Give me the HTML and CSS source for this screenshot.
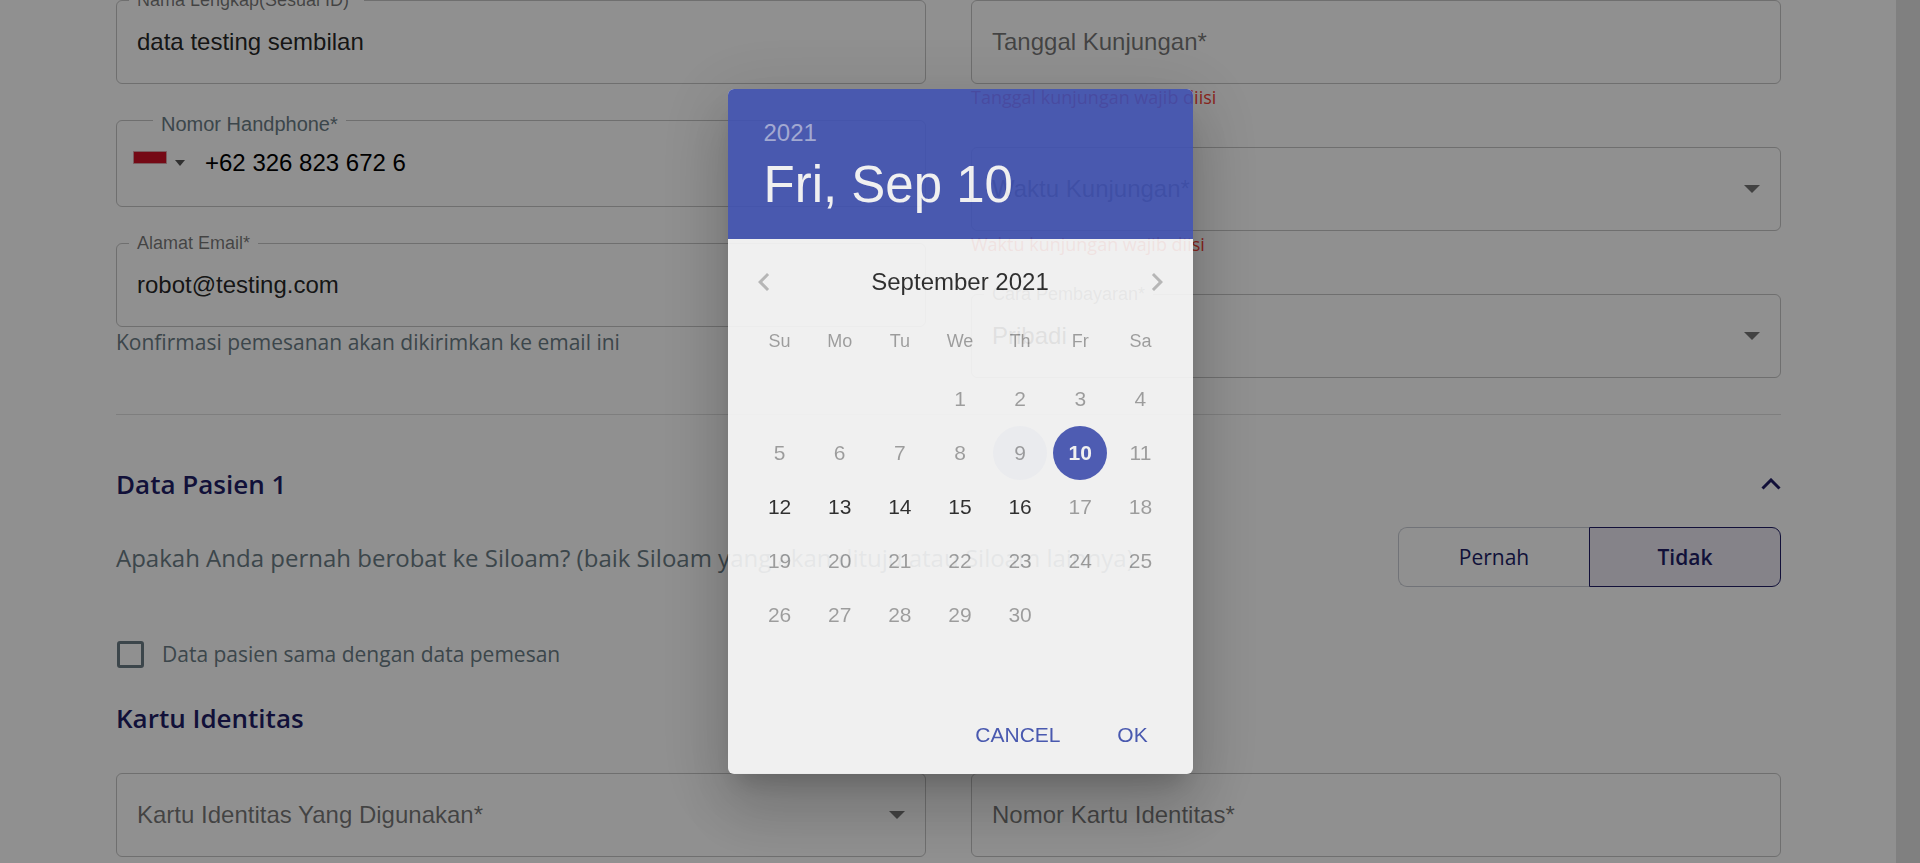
FILE: index.html
```html
<!DOCTYPE html>
<html lang="id">
<head>
<meta charset="utf-8">
<meta name="viewport" content="width=device-width, initial-scale=1">
<title>Data Pemesan</title>
<link rel="stylesheet" href="styles.css">
</head>
<body>
<main class="page">
  <div class="columns">
    <div class="column">
      <div class="field">
        <label class="field-label" for="name">Nama Lengkap(Sesuai ID)*</label>
        <input class="field-input" id="name" type="text" value="data testing sembilan">
      </div>
      <div class="field phone">
        <label class="field-label phone-label" for="phone">Nomor Handphone*</label>
        <button class="country" type="button" aria-label="Indonesia">
          <svg class="flag" viewBox="0 0 34 26" aria-hidden="true"><path fill="#fff" d="M0 0h34v24H0z"/><path fill="#d01126" stroke="#d9a5aa" stroke-width="1" d="M.5.5h33v12H.5z"/></svg>
          <svg class="flag-arrow" viewBox="0 0 10 8" aria-hidden="true"><path fill="#555" d="M0 0h10L5 6z"/></svg>
        </button>
        <input class="field-input phone-input" id="phone" type="tel" value="+62 326 823 672 6">
      </div>
      <div class="field email">
        <label class="field-label" for="email">Alamat Email*</label>
        <input class="field-input" id="email" type="email" value="robot@testing.com">
      </div>
      <p class="hint">Konfirmasi pemesanan akan dikirimkan ke email ini</p>
    </div>
    <div class="column">
      <div class="field">
        <input class="field-input" type="text" placeholder="Tanggal Kunjungan*" aria-label="Tanggal Kunjungan">
      </div>
      <p class="error">Tanggal kunjungan wajib diisi</p>
      <div class="field">
        <select class="field-input empty" aria-label="Waktu Kunjungan"><option>Waktu Kunjungan*</option></select>
        <svg class="caret" viewBox="0 0 16 8" aria-hidden="true"><path fill="#757575" d="M0 0h16L8 8z"/></svg>
      </div>
      <p class="error">Waktu kunjungan wajib diisi</p>
      <div class="field">
        <label class="field-label" for="payment">Cara Pembayaran*</label>
        <select class="field-input" id="payment"><option>Pribadi</option></select>
        <svg class="caret" viewBox="0 0 16 8" aria-hidden="true"><path fill="#757575" d="M0 0h16L8 8z"/></svg>
      </div>
    </div>
  </div>

  <section class="patient">
    <header class="patient-head">
      <h2 class="title">Data Pasien 1</h2>
      <button class="collapse" type="button" aria-label="Tutup">
        <svg class="collapse-icon" viewBox="0 0 20 12" aria-hidden="true"><path fill="none" stroke="#201e66" stroke-width="3" d="M1.5 10.5 10 2l8.500 8.500"/></svg>
      </button>
    </header>
    <div class="question">
      <p class="question-text">Apakah Anda pernah berobat ke Siloam? (baik Siloam yang akan dituju atau Siloam lainnya)</p>
      <div class="toggle">
        <button class="toggle-option" type="button">Pernah</button>
        <button class="toggle-option chosen" type="button">Tidak</button>
      </div>
    </div>
    <label class="same"><input class="same-box" type="checkbox"><span>Data pasien sama dengan data pemesan</span></label>
    <h2 class="title">Kartu Identitas</h2>
    <div class="columns identity">
      <div class="field">
        <select class="field-input empty" aria-label="Kartu Identitas"><option>Kartu Identitas Yang Digunakan*</option></select>
        <svg class="caret" viewBox="0 0 16 8" aria-hidden="true"><path fill="#757575" d="M0 0h16L8 8z"/></svg>
      </div>
      <div class="field">
        <input class="field-input" type="text" placeholder="Nomor Kartu Identitas*" aria-label="Nomor Kartu Identitas">
      </div>
    </div>
  </section>
</main>

<div class="backdrop"></div>
<div class="modal">
  <div class="picker" role="dialog" aria-modal="true" aria-label="Pilih tanggal">
    <div class="picker-head">
      <button class="picker-year" type="button">2021</button>
      <h3 class="picker-date">Fri, Sep 10</h3>
    </div>
    <div class="picker-body">
      <div class="month">
        <button class="month-nav" type="button" aria-label="Sebelumnya"><svg class="month-icon" viewBox="0 0 24 24" aria-hidden="true"><path d="M15.410 16.590 10.830 12l4.580-4.590L14 6l-6 6 6 6z"/></svg></button>
        <p class="month-name">September 2021</p>
        <button class="month-nav" type="button" aria-label="Berikutnya"><svg class="month-icon" viewBox="0 0 24 24" aria-hidden="true"><path d="M8.590 16.590 13.170 12 8.590 7.410 10 6l6 6-6 6z"/></svg></button>
      </div>
      <table class="days">
        <thead><tr><th>Su</th><th>Mo</th><th>Tu</th><th>We</th><th>Th</th><th>Fr</th><th>Sa</th></tr></thead>
        <tbody>
          <tr><td></td><td></td><td></td><td><button class="day" disabled>1</button></td><td><button class="day" disabled>2</button></td><td><button class="day" disabled>3</button></td><td><button class="day" disabled>4</button></td></tr>
          <tr><td><button class="day" disabled>5</button></td><td><button class="day" disabled>6</button></td><td><button class="day" disabled>7</button></td><td><button class="day" disabled>8</button></td><td><button class="day touched" disabled>9</button></td><td><button class="day selected">10</button></td><td><button class="day" disabled>11</button></td></tr>
          <tr><td><button class="day">12</button></td><td><button class="day">13</button></td><td><button class="day">14</button></td><td><button class="day">15</button></td><td><button class="day">16</button></td><td><button class="day" disabled>17</button></td><td><button class="day" disabled>18</button></td></tr>
          <tr><td><button class="day" disabled>19</button></td><td><button class="day" disabled>20</button></td><td><button class="day" disabled>21</button></td><td><button class="day" disabled>22</button></td><td><button class="day" disabled>23</button></td><td><button class="day" disabled>24</button></td><td><button class="day" disabled>25</button></td></tr>
          <tr><td><button class="day" disabled>26</button></td><td><button class="day" disabled>27</button></td><td><button class="day" disabled>28</button></td><td><button class="day" disabled>29</button></td><td><button class="day" disabled>30</button></td><td></td><td></td></tr>
        </tbody>
      </table>
    </div>
    <div class="picker-actions">
      <button class="action" type="button">CANCEL</button>
      <button class="action" type="button">OK</button>
    </div>
  </div>
</div>
</body>
</html>
```
FILE: styles.css
```css
* {
  box-sizing: border-box;
}

html {
  height: 100%;
  overflow: hidden;
}

body {
  margin: 0;
  height: 100%;
  overflow: hidden;
  padding-right: 24px;
  background: #e3e3e3;
  font-family: "Liberation Sans", Arial, sans-serif;
  font-size: 24px;
  color: rgba(0, 0, 0, 0.87);
}

button,
input,
select {
  font: inherit;
  color: inherit;
}

button {
  border: 0;
  padding: 0;
  background: none;
}

p,
h2,
h3 {
  margin: 0;
}

.page {
  min-height: 100%;
  padding: 0 115px 0 116px;
  background: #fff;
}

.columns {
  display: grid;
  grid-template-columns: 1fr 1fr;
  gap: 45px;
}

.field {
  position: relative;
  display: flex;
  align-items: center;
  height: 84px;
  border: 1px solid rgba(0, 0, 0, 0.23);
  border-radius: 6px;
}

.field-input {
  flex: 1;
  min-width: 0;
  height: 100%;
  padding: 0 20px 1px;
  border: 0;
  outline: 0;
  background: none;
  appearance: none;
}

.field-input::placeholder,
.empty {
  color: rgba(0, 0, 0, 0.54);
  opacity: 1;
}

.field-label {
  position: absolute;
  top: -13px;
  left: 12px;
  padding: 0 8px;
  background: #fff;
  font-size: 18px;
  line-height: 24px;
  color: rgba(0, 0, 0, 0.54);
}

.caret {
  position: absolute;
  right: 20px;
  width: 16px;
  height: 8px;
}

.phone {
  height: 87px;
  margin-top: 36px;
}

.phone-label {
  top: -9px;
  left: 36px;
  font-size: 20px;
  color: #6b7c85;
}

.country {
  display: flex;
  align-items: center;
  gap: 8px;
  padding-left: 16px;
}

.flag {
  width: 34px;
  height: 26px;
}

.flag-arrow {
  width: 10px;
  height: 8px;
}

.phone-input {
  padding-bottom: 2px;
  color: #000;
}

.email {
  margin-top: 36px;
}

.hint {
  font-family: "Open Sans", sans-serif;
  font-size: 21px;
  line-height: 30px;
  color: #6b7c85;
}

.error {
  height: 63px;
  font-family: "Open Sans", sans-serif;
  font-size: 18px;
  line-height: 26px;
  color: #f44336;
}

.patient {
  margin-top: 36px;
  border-top: 1px solid rgba(0, 0, 0, 0.12);
  padding-top: 51px;
  font-family: "Open Sans", sans-serif;
  color: #6b7c85;
}

.title {
  font-size: 26px;
  font-weight: 600;
  line-height: 36px;
  color: #201e66;
}

.patient-head,
.question {
  display: flex;
  align-items: center;
  justify-content: space-between;
}

.collapse-icon {
  display: block;
  width: 20px;
  height: 12px;
}

.question {
  margin-top: 25px;
}

.toggle {
  display: flex;
  width: 383px;
}

.toggle-option {
  flex: 1;
  height: 60px;
  border: 1px solid #c8ccd4;
  border-right: 0;
  border-radius: 9px 0 0 9px;
  font-size: 21px;
  color: #201e66;
}

.toggle-option.chosen {
  border: 1px solid #201e66;
  border-radius: 0 9px 9px 0;
  background: #ebe9f2;
  font-weight: 600;
}

.same {
  display: flex;
  align-items: center;
  gap: 18px;
  margin-top: 49px;
  padding-left: 1px;
  font-size: 21px;
  line-height: 36px;
}

.same-box {
  width: 27px;
  height: 27px;
  margin: 0;
  border: 3px solid #6b7c85;
  border-radius: 3px;
  appearance: none;
}

.same + .title {
  margin-top: 28px;
}

.identity {
  margin-top: 37px;
  font-family: "Liberation Sans", Arial, sans-serif;
}

.backdrop {
  position: fixed;
  inset: 0;
  background: #000;
  opacity: 0.435;
}

.modal {
  position: fixed;
  inset: 0;
  display: flex;
  align-items: center;
  justify-content: center;
  opacity: 0.87;
}

.picker {
  width: 465px;
  overflow: hidden;
  border-radius: 6px;
  background: #fff;
  box-shadow:
    0 16px 22px -10px rgba(0, 0, 0, 0.2),
    0 36px 57px 4px rgba(0, 0, 0, 0.14),
    0 14px 69px 12px rgba(0, 0, 0, 0.12);
}

.picker-head {
  display: flex;
  flex-direction: column;
  align-items: flex-start;
  justify-content: center;
  height: 150px;
  padding: 0 36px;
  background: #3f51b5;
  color: #fff;
}

.picker-year {
  padding-bottom: 2px;
  line-height: 40px;
  color: rgba(255, 255, 255, 0.54);
}

.picker-date {
  font-size: 51px;
  font-weight: 400;
  line-height: 60px;
}

.picker-body {
  height: 457px;
  padding: 7px 22px 0;
}

.month {
  display: flex;
  align-items: center;
  justify-content: space-between;
  height: 72px;
}

.month-nav {
  margin: 0 -13px;
  padding: 0 9px;
}

.month-icon {
  display: block;
  width: 36px;
  height: 36px;
  fill: rgba(0, 0, 0, 0.26);
}

.days {
  width: 100%;
  table-layout: fixed;
  border-collapse: collapse;
}

.days th {
  height: 54px;
  padding: 0 0 8px;
  font-size: 18px;
  font-weight: 400;
  color: rgba(0, 0, 0, 0.38);
}

.days td {
  height: 54px;
  padding: 0;
  text-align: center;
}

.day {
  width: 54px;
  height: 54px;
  border-radius: 50%;
  font-size: 21px;
  vertical-align: top;
  color: rgba(0, 0, 0, 0.87);
}

.day:disabled {
  color: rgba(0, 0, 0, 0.38);
}

.day.touched {
  background: rgba(63, 81, 181, 0.03);
}

.day.selected {
  background: #4555b8;
  font-weight: 700;
  color: #fff;
}

.picker-actions {
  display: flex;
  justify-content: flex-end;
  gap: 12px;
  padding: 12px;
}

.action {
  min-width: 96px;
  height: 54px;
  padding: 0 12px;
  font-size: 21px;
  color: #3f51b5;
}
```
